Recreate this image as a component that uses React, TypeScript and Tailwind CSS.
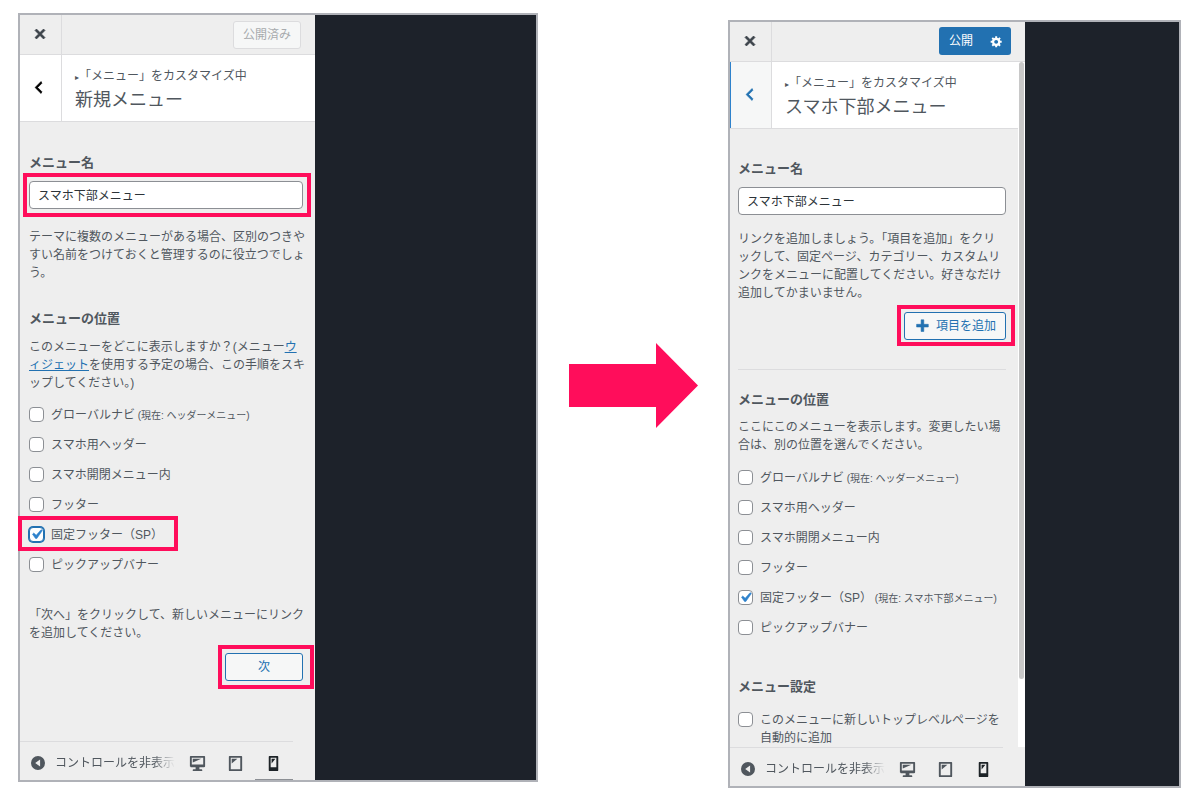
import clsx from 'clsx';
import React, { ReactNode } from 'react';

const ICONS = {
    close: 'M14.95 6.46L11.41 10l3.54 3.54-1.41 1.41L10 11.42l-3.53 3.53-1.42-1.42L8.58 10 5.05 6.47l1.42-1.42L10 8.58l3.54-3.53z',
    back: 'M14 5l-5 5 5 5-1 2-7-7 7-7z',
    plus: 'M17 7v3h-5v5H9v-5H4V7h5V2h3v5h5z',
    gear: 'M18 12h-2.18c-.17.7-.44 1.35-.81 1.93l1.54 1.54-2.1 2.1-1.54-1.54c-.58.36-1.23.63-1.91.79V19H8v-2.18c-.68-.16-1.33-.43-1.91-.79l-1.54 1.54-2.12-2.12 1.54-1.54c-.36-.58-.63-1.23-.79-1.91H1V9.03h2.17c.16-.7.44-1.35.8-1.94L2.43 5.55l2.1-2.1 1.54 1.54c.58-.37 1.24-.64 1.93-.81V2h3v2.18c.68.16 1.33.43 1.91.79l1.54-1.54 2.12 2.12-1.54 1.54c.36.59.64 1.24.8 1.94H18V12zm-8.5 1.5c1.66 0 3-1.34 3-3s-1.34-3-3-3-3 1.34-3 3 1.34 3 3 3z',
    check: 'M14.83 4.89l1.34.94-5.81 8.38H9.02L5.78 9.67l1.34-1.25 2.57 2.4z',
    collapse:
        'M10 0a10 10 0 1 0 0 20 10 10 0 0 0 0-20zM13 5v10L6 10z',
    desktop:
        'M3 2h14c.55 0 1 .45 1 1v10c0 .55-.45 1-1 1h-5v2h2c.55 0 1 .45 1 1v1H5v-1c0-.55.45-1 1-1h2v-2H3c-.55 0-1-.45-1-1V3c0-.55.45-1 1-1zm13 9V4H4v7h12zM5 5h9L5 9V5z',
    tablet: 'M4 2h12c.55 0 1 .45 1 1v14c0 .55-.45 1-1 1H4c-.55 0-1-.45-1-1V3c0-.55.45-1 1-1zm11 14V4H5v12h10zM6 5h6l-6 5V5z',
    smartphone:
        'M6 2h8c.55 0 1 .45 1 1v14c0 .55-.45 1-1 1H6c-.55 0-1-.45-1-1V3c0-.55.45-1 1-1zm7 12V4H7v10h6zM8 5h4l-4 5V5z',
};

function Icon({
    name,
    className,
}: {
    name: keyof typeof ICONS;
    className?: string;
}) {
    return (
        <svg
            viewBox="0 0 20 20"
            fill="currentColor"
            fillRule="evenodd"
            aria-hidden="true"
            className={clsx('shrink-0', className)}
        >
            <path d={ICONS[name]} />
        </svg>
    );
}

// pink frame laid over the control it wraps
function Highlight({ className }: { className: string }) {
    return (
        <span
            aria-hidden="true"
            className={clsx(
                'absolute border-4 border-[#ff0d5b] pointer-events-none',
                className
            )}
        />
    );
}

function SectionTitle({
    className,
    children,
}: {
    className?: string;
    children: ReactNode;
}) {
    return (
        <h3 className={clsx('text-[13px] leading-5 font-bold', className)}>
            {children}
        </h3>
    );
}

function NameField({
    id,
    highlighted,
}: {
    id: string;
    highlighted?: boolean;
}) {
    return (
        <>
            <label htmlFor={id} className="block text-[13px] leading-5 font-bold">
                メニュー名
            </label>
            <div className="relative mt-2">
                <input
                    id={id}
                    type="text"
                    defaultValue="スマホ下部メニュー"
                    className="block w-full h-7 px-2 pb-[2px] rounded-[4px] border border-[#8c8f94] bg-white text-[#2c3338] outline-none"
                />
                {highlighted && (
                    <Highlight className="-left-[6px] -right-2 -inset-y-2" />
                )}
            </div>
        </>
    );
}

function CheckRow({
    id,
    label,
    note,
    checked,
    focused,
    highlighted,
}: {
    id: string;
    label: ReactNode;
    note?: string;
    checked?: boolean;
    focused?: boolean;
    highlighted?: boolean;
}) {
    return (
        <div className="relative flex items-start gap-[7px] w-fit py-[6px]">
            <span className="grid mt-[1px]">
                <input
                    id={id}
                    type="checkbox"
                    defaultChecked={checked}
                    className={clsx(
                        'peer appearance-none [grid-area:1/1] size-[15px] rounded-[4px] border bg-white',
                        focused
                            ? 'border-[#2271b1] ring-1 ring-[#2271b1]'
                            : 'border-[#8c8f94]'
                    )}
                />
                <Icon
                    name="check"
                    className="hidden peer-checked:block [grid-area:1/1] size-[19px] -m-[2px] text-[#2e82cc] stroke-current stroke-[0.6] pointer-events-none"
                />
            </span>
            <label htmlFor={id} className="whitespace-nowrap">
                {label}
                {note && <span className="text-[10px] leading-none"> {note}</span>}
            </label>
            {highlighted && (
                <Highlight className="-left-[11px] -right-[15px] -top-1 -bottom-[1px]" />
            )}
        </div>
    );
}

function Locations({
    prefix,
    current,
    focused,
}: {
    prefix: string;
    current?: string;
    focused?: boolean;
}) {
    return (
        <>
            <CheckRow
                id={`${prefix}-global`}
                label="グローバルナビ"
                note="(現在: ヘッダーメニュー)"
            />
            <CheckRow id={`${prefix}-sp-header`} label="スマホ用ヘッダー" />
            <CheckRow id={`${prefix}-sp-menu`} label="スマホ開閉メニュー内" />
            <CheckRow id={`${prefix}-footer`} label="フッター" />
            <CheckRow
                id={`${prefix}-fixed`}
                label="固定フッター（SP）"
                note={current}
                checked
                focused={focused}
                highlighted={focused}
            />
            <CheckRow id={`${prefix}-pickup`} label="ピックアップバナー" />
        </>
    );
}

function PanelFooter({ underlined }: { underlined: boolean }) {
    return (
        <div className="flex h-[39px]">
            <div className="flex w-[273px] border-t border-[#dcdcde]">
                <button
                    type="button"
                    className="flex items-center w-[156px] pl-[11px] pt-[3px] gap-[10px] mr-[2px] cursor-pointer"
                >
                    <Icon name="collapse" className="size-[14px] text-[#50575e]" />
                    <span className="whitespace-nowrap [mask-image:linear-gradient(to_right,black_82%,transparent)]">
                        コントロールを非表示
                    </span>
                </button>
                <button
                    type="button"
                    aria-label="デスクトップ"
                    className="flex items-center justify-center flex-1 pt-[5px] cursor-pointer"
                >
                    <Icon name="desktop" className="size-[19px]" />
                </button>
                <button
                    type="button"
                    aria-label="タブレット"
                    className="flex items-center justify-center flex-1 pt-[5px] cursor-pointer"
                >
                    <Icon name="tablet" className="size-[19px]" />
                </button>
                <button
                    type="button"
                    aria-label="モバイル"
                    className={clsx(
                        'flex items-center justify-center flex-1 pt-[5px] text-[#1d2327] cursor-pointer',
                        underlined && 'shadow-[inset_0_-1px_0_#8c8f94]'
                    )}
                >
                    <Icon name="smartphone" className="size-[19px]" />
                </button>
            </div>
        </div>
    );
}

function Customizer({
    title,
    action,
    active = false,
    children,
}: {
    title: string;
    action: ReactNode;
    active?: boolean;
    children: ReactNode;
}) {
    return (
        <section className="flex border-2 border-[#b0b2b8] bg-[#1d222a]">
            <div className="flex flex-col w-[295px] shrink-0 bg-[#eeeeee]">
                <header className="flex h-10 border-b border-[#dcdcde]">
                    <button
                        type="button"
                        aria-label="閉じる"
                        className="flex items-center justify-center w-[42px] pr-[1px] pb-[1px] border-r border-[#dcdcde] text-[#3c434a] cursor-pointer"
                    >
                        <Icon
                            name="close"
                            className="size-[20px] stroke-current stroke-[0.8]"
                        />
                    </button>
                    <div className="flex flex-1 items-center justify-end pr-[14px]">
                        {action}
                    </div>
                </header>
                <div className="flex">
                    <div className="flex-1 min-w-0">
                        <div className="flex h-[67px] bg-white border-b border-[#dcdcde]">
                            <button
                                type="button"
                                aria-label="戻る"
                                className={clsx(
                                    'flex items-center justify-center w-[42px] pr-1 pb-[1px] border-r border-r-[#dcdcde] cursor-pointer',
                                    active
                                        ? 'bg-[#f6f7f7] text-[#2271b1] border-l border-l-[#2e82cc]'
                                        : 'text-black'
                                )}
                            >
                                <Icon
                                    name="back"
                                    className="size-[17px] stroke-current stroke-[0.8]"
                                />
                            </button>
                            <div className="flex flex-col pl-[13px] pt-3 whitespace-nowrap">
                                <span>
                                    <span className="text-[8px]">▸</span>
                                    「メニュー」をカスタマイズ中
                                </span>
                                <h2 className="text-[18px] leading-[26px]">{title}</h2>
                            </div>
                        </div>
                        {children}
                    </div>
                    {active && (
                        <div className="w-[7px] px-[1px] bg-white">
                            <div className="h-[90%] rounded-full bg-[#c8c8c8]" />
                        </div>
                    )}
                </div>
                <PanelFooter underlined={!active} />
            </div>
        </section>
    );
}

export default function App() {
    return (
        <main
            lang="ja"
            className="grid grid-cols-[minmax(299px,520fr)_190px_minmax(299px,453fr)] items-start pl-[18px] pr-[19px] pt-[13px] pb-3 bg-white text-[#50575e] text-[12px] leading-[18px] font-['Liberation_Sans','Noto_Sans_CJK_JP',sans-serif]"
        >
            <Customizer
                title="新規メニュー"
                action={
                    <button
                        type="button"
                        disabled
                        className="h-7 px-[9px] rounded-[3px] border border-[#dcdcde] bg-[#f6f7f7] text-[#a7aaad]"
                    >
                        公開済み
                    </button>
                }
            >
                <div className="pl-[9px] pr-3 pt-[31px] pb-[60px]">
                    <NameField id="new-name" highlighted />
                    <p className="mt-[19px] whitespace-nowrap">
                        テーマに複数のメニューがある場合、区別のつきや
                        <br />
                        すい名前をつけておくと管理するのに役立つでしょ
                        <br />
                        う。
                    </p>
                    <SectionTitle className="mt-[27px]">メニューの位置</SectionTitle>
                    <p className="mt-[9px] mb-2 whitespace-nowrap">
                        このメニューをどこに表示しますか？(メニュー
                        <a href="#widgets" className="text-[#2271b1] underline">
                            ウ
                            <br />
                            ィジェット
                        </a>
                        を使用する予定の場合、この手順をスキ
                        <br />
                        ップしてください。)
                    </p>
                    <Locations prefix="new" focused />
                    <p className="mt-[26px] whitespace-nowrap">
                        「次へ」をクリックして、新しいメニューにリンク
                        <br />
                        を追加してください。
                    </p>
                    <div className="relative w-fit ml-auto mt-[11px]">
                        <button
                            type="button"
                            className="block w-[78px] h-7 rounded-[3px] border border-[#2271b1] bg-[#f6f7f7] text-[#2271b1] cursor-pointer"
                        >
                            次
                        </button>
                        <Highlight className="-left-[7px] -right-[11px] -inset-y-2" />
                    </div>
                </div>
            </Customizer>

            <svg
                viewBox="0 0 129 85"
                className="w-[129px] h-[85px] mt-[330px] ml-[31px]"
                role="img"
                aria-label="次の画面"
            >
                <path d="M0 21h87V0l42 42.5L87 85V64H0z" fill="#ff0d5b" />
            </svg>

            <div className="pt-[7px]">
                <Customizer
                    title="スマホ下部メニュー"
                    active
                    action={
                        <div className="flex h-7 mb-[1px] rounded-[3px] bg-[#2271b1] text-white">
                            <button type="button" className="pl-[10px] pr-2 cursor-pointer">
                                公開
                            </button>
                            <button
                                type="button"
                                aria-label="公開設定"
                                className="flex items-center pl-[9px] pr-2 cursor-pointer"
                            >
                                <Icon name="gear" className="size-[13px]" />
                            </button>
                        </div>
                    }
                >
                    <div className="pl-2 pr-3 pt-[30px]">
                        <NameField id="edit-name" />
                        <p className="mt-[15px] whitespace-nowrap">
                            リンクを追加しましょう。「項目を追加」をクリ
                            <br />
                            ックして、固定ページ、カテゴリー、カスタムリ
                            <br />
                            ンクをメニューに配置してください。好きなだけ
                            <br />
                            追加してかまいません。
                        </p>
                        <div className="relative w-fit ml-auto mt-[10px]">
                            <button
                                type="button"
                                className="flex items-center gap-[5px] h-7 pl-2 pr-[9px] rounded-[3px] border border-[#2271b1] bg-[#f6f7f7] text-[#2271b1] cursor-pointer"
                            >
                                <Icon
                                    name="plus"
                                    className="size-[18px] mt-[2px] stroke-current stroke-[0.6]"
                                />
                                項目を追加
                            </button>
                            <Highlight className="-left-[7px] -right-[9px] -top-[7px] -bottom-[6px]" />
                        </div>
                        <hr className="mt-[29px] border-[#dcdcde]" />
                        <SectionTitle className="mt-5">メニューの位置</SectionTitle>
                        <p className="mt-2 mb-[9px] whitespace-nowrap">
                            ここにこのメニューを表示します。変更したい場
                            <br />
                            合は、別の位置を選んでください。
                        </p>
                        <Locations prefix="edit" current="(現在: スマホ下部メニュー)" />
                        <SectionTitle className="mt-[34px] mb-2">
                            メニュー設定
                        </SectionTitle>
                        <div className="-mb-[6px]">
                            <CheckRow
                                id="edit-auto-add"
                                label={
                                    <>
                                        このメニューに新しいトップレベルページを
                                        <br />
                                        自動的に追加
                                    </>
                                }
                            />
                        </div>
                    </div>
                </Customizer>
            </div>
        </main>
    );
}
